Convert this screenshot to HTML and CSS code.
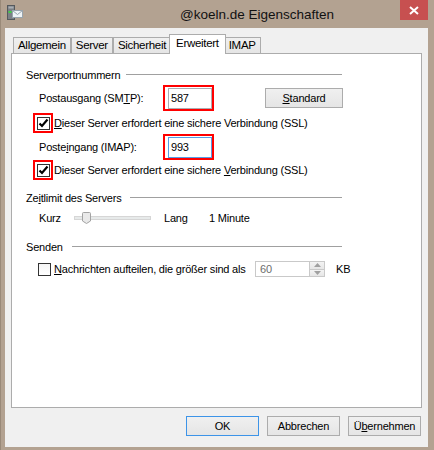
FILE: index.html
```html
<!DOCTYPE html>
<html lang="de">

<head>
  <meta charset="UTF-8">
  <title>@koeln.de Eigenschaften</title>
  <link rel="stylesheet" href="styles.css">
</head>

<body>
  <div class="window">
    <div class="titlebar">
      <svg class="app-icon" width="16" height="16" viewBox="0 0 16 16">
        <rect x="0.5" y="0.5" width="7" height="14" fill="#7b8085" stroke="#55595d" />
        <rect x="1.5" y="1.5" width="5" height="2" fill="#a9aeb3" />
        <rect x="1.5" y="6" width="3" height="2" fill="#3fcf45" />
        <rect x="5.5" y="5.5" width="10" height="7" fill="#eef3f6" stroke="#98a4ad" />
        <path d="M5.5 5.5 L10.5 9.5 L15.5 5.5" fill="none" stroke="#98a4ad" />
      </svg>
      <span class="title">@koeln.de Eigenschaften</span>
      <div class="close">
        <svg width="10" height="9" viewBox="0 0 10 9">
          <path d="M1 1 L9 8 M9 1 L1 8" stroke="#fff" stroke-width="2" />
        </svg>
      </div>
    </div>

    <div class="client">
      <div class="tabs">
        <span class="tab">Allgemein</span>
        <span class="tab">Server</span>
        <span class="tab">Sicherheit</span>
        <span class="tab active">Erweitert</span>
        <span class="tab">IMAP</span>
      </div>

      <div class="panel">
        <div class="group-title">Serverportnummern</div>

        <div class="port-row">
          <span class="label">Postausgang (SM<u>T</u>P):</span>
          <span class="mark field-mark"><span class="field">587</span></span>
          <span class="btn std-btn"><u>S</u>tandard</span>
        </div>
        <div class="check-row">
          <span class="mark box-mark"><span class="box checked"></span></span>
          <span class="check-text"><u>D</u>ieser Server erfordert eine sichere Verbindung (SSL)</span>
        </div>

        <div class="port-row second">
          <span class="label">Poste<u>i</u>ngang (IMAP):</span>
          <span class="mark field-mark"><span class="field focus">993</span></span>
        </div>
        <div class="check-row second">
          <span class="mark box-mark"><span class="box checked"></span></span>
          <span class="check-text">Dieser Server erfordert eine sichere <u>V</u>erbindung (SSL)</span>
        </div>

        <div class="group-title timeout">Ze<u>i</u>tlimit des Servers</div>
        <div class="slider-row">
          <span class="short">Kurz</span>
          <span class="track">
            <svg class="thumb" width="9" height="12" viewBox="0 0 9 12">
              <path d="M0.5 1.5 Q0.5 0.5 1.5 0.5 L7.5 0.5 Q8.5 0.5 8.5 1.5 L8.5 9 L4.5 11.5 L0.5 9 Z" fill="#e9e9e9" stroke="#a3a3a3" />
            </svg>
          </span>
          <span class="long">Lang</span>
          <span>1 Minute</span>
        </div>

        <div class="group-title send">Senden</div>
        <div class="split-row">
          <span class="box"></span>
          <span class="split-text"><u>N</u>achrichten aufteilen, die größer sind als</span>
          <span class="spin">
            <span class="spin-field">60</span>
            <span class="spin-btns">
              <span class="spin-btn">
                <svg width="7" height="4" viewBox="0 0 7 4"><path d="M0 4 L3.5 0 L7 4 Z" fill="#a0a0a0" /></svg>
              </span>
              <span class="spin-btn">
                <svg width="7" height="4" viewBox="0 0 7 4"><path d="M0 0 L3.5 4 L7 0 Z" fill="#a0a0a0" /></svg>
              </span>
            </span>
          </span>
          <span class="unit">KB</span>
        </div>
      </div>

      <div class="buttons">
        <span class="btn default">OK</span>
        <span class="btn">Abbrechen</span>
        <span class="btn">Ü<u>b</u>ernehmen</span>
      </div>
    </div>
  </div>
</body>

</html>
```

FILE: styles.css
```css
* {
  padding: 0;
  margin: 0;
  box-sizing: border-box;
}

body {
  font-family: "Liberation Sans", Arial, sans-serif;
  font-size: 11px;
  letter-spacing: -0.2px;
  color: #000;
  background: #b3a291;
}

.window {
  width: 434px;
  height: 450px;
  background: #b3a291;
  border-left: 1px solid #9a8a79;
  display: flex;
  flex-direction: column;
}

/* 标题栏 */
.titlebar {
  height: 28px;
  display: flex;
  align-items: flex-start;
}

.app-icon {
  margin: 5px 0 0 6px;
}

.title {
  margin-left: 157px;
  padding-top: 6px;
  line-height: 18px;
  font-size: 13.5px;
  letter-spacing: 0;
  color: #111;
}

.close {
  margin-left: auto;
  margin-right: 6px;
  width: 28px;
  height: 20px;
  background: #c75050;
  display: flex;
  align-items: center;
  justify-content: center;
}

.client {
  flex: 1;
  margin: 0 6px 3px 4px;
  background: #f0f0f0;
  display: flex;
  flex-direction: column;
}

/* 选项卡 */
.tabs {
  display: flex;
  align-items: flex-end;
  height: 19px;
  margin: 6px 0 0 8px;
  position: relative;
  z-index: 1;
}

.tab {
  height: 16px;
  padding: 0 4px;
  border: 1px solid #acacac;
  border-bottom: 0;
  background: linear-gradient(#f0f0f0, #e5e5e5);
  line-height: 15px;
  font-size: 11.5px;
  letter-spacing: -0.3px;
}

.tab.active {
  height: 20px;
  margin: 0 -2px -1px;
  padding: 0 6px;
  background: #fff;
  line-height: 16px;
  position: relative;
}

.panel {
  flex: 1;
  margin: 0 6px;
  border: 1px solid #acacac;
  background: #fff;
  padding-left: 14px;
}

.group-title {
  display: flex;
  align-items: center;
  width: 316px;
  height: 14px;
  line-height: 14px;
  margin-top: 14px;
}

.group-title::after {
  content: "";
  flex: 1;
  height: 1px;
  background: #a0a0a0;
  margin: 0 0 2px 6px;
}

.group-title.timeout {
  margin-top: 11px;
}

.group-title.timeout::after,
.group-title.send::after {
  margin-left: 9px;
}

/* 红色标记框 */
.mark {
  border: 2px solid #f00;
  display: flex;
}

.port-row {
  display: flex;
  align-items: center;
  height: 26px;
  margin-top: 3px;
}

.port-row.second {
  margin-top: 1px;
}

.port-row .label {
  width: 124px;
  margin-left: 13px;
}

.field-mark {
  width: 51px;
  height: 26px;
  padding: 1px 0 0 3px;
}

.field {
  width: 44px;
  height: 21px;
  border: 1px solid #abadb3;
  padding-left: 2px;
  line-height: 19px;
  background: #fff;
}

.field.focus {
  border-color: #569de5;
}

.btn {
  width: 73px;
  height: 20px;
  border: 1px solid #acacac;
  background: linear-gradient(#f0f0f0, #e5e5e5);
  text-align: center;
  line-height: 18px;
}

.btn.default {
  border-color: #3d94e8;
}

.std-btn {
  width: 78px;
  margin-left: 51px;
}

.check-row {
  display: flex;
  align-items: center;
  height: 20px;
  margin-top: 2px;
}

.check-row.second {
  margin-top: 0;
}

.box-mark {
  width: 20px;
  height: 20px;
  margin-left: 7px;
  padding: 2px 0 0 2px;
}

.box {
  width: 13px;
  height: 13px;
  border: 1px solid #333;
  background: linear-gradient(#f4f4f4, #fff);
}

.box.checked {
  background: #fff url("data:image/svg+xml,%3Csvg xmlns='http://www.w3.org/2000/svg' width='11' height='11' viewBox='0 0 11 11'%3E%3Cpath d='M1.5 5.5 L4 8 L9.5 1.5' fill='none' stroke='%23000' stroke-width='2.2'/%3E%3C/svg%3E") no-repeat center;
}

.check-text {
  margin-left: 1px;
}

/* 滑块 */
.slider-row {
  display: flex;
  align-items: center;
  height: 16px;
  margin-top: 5px;
}

.short {
  width: 35px;
  margin-left: 13px;
}

.track {
  position: relative;
  width: 77px;
  height: 4px;
  border: 1px solid #d6d6d6;
  background: #e7eaea;
}

.thumb {
  position: absolute;
  left: 7px;
  top: -5px;
}

.long {
  width: 45px;
  margin-left: 13px;
}

.split-row {
  display: flex;
  align-items: center;
  height: 16px;
  margin-top: 7px;
}

.split-row .box {
  margin-left: 12px;
}

.split-text {
  width: 201px;
  margin-left: 3px;
}

.spin {
  display: flex;
  height: 16px;
}

.spin-field {
  width: 54px;
  height: 16px;
  border: 1px solid #c9c9c9;
  border-right: 0;
  padding-left: 4px;
  line-height: 14px;
  color: #6d6d6d;
}

.spin-btns {
  display: flex;
  flex-direction: column;
  width: 16px;
}

.spin-btn {
  flex: 1;
  border: 1px solid #c9c9c9;
  background: linear-gradient(#f3f3f3, #e6e6e6);
  display: flex;
  align-items: center;
  justify-content: center;
}

.spin-btn + .spin-btn {
  border-top: 0;
}

.unit {
  margin-left: 11px;
}

.buttons {
  display: flex;
  justify-content: flex-end;
  gap: 8px;
  margin: 8px 7px 11px 0;
}
```
